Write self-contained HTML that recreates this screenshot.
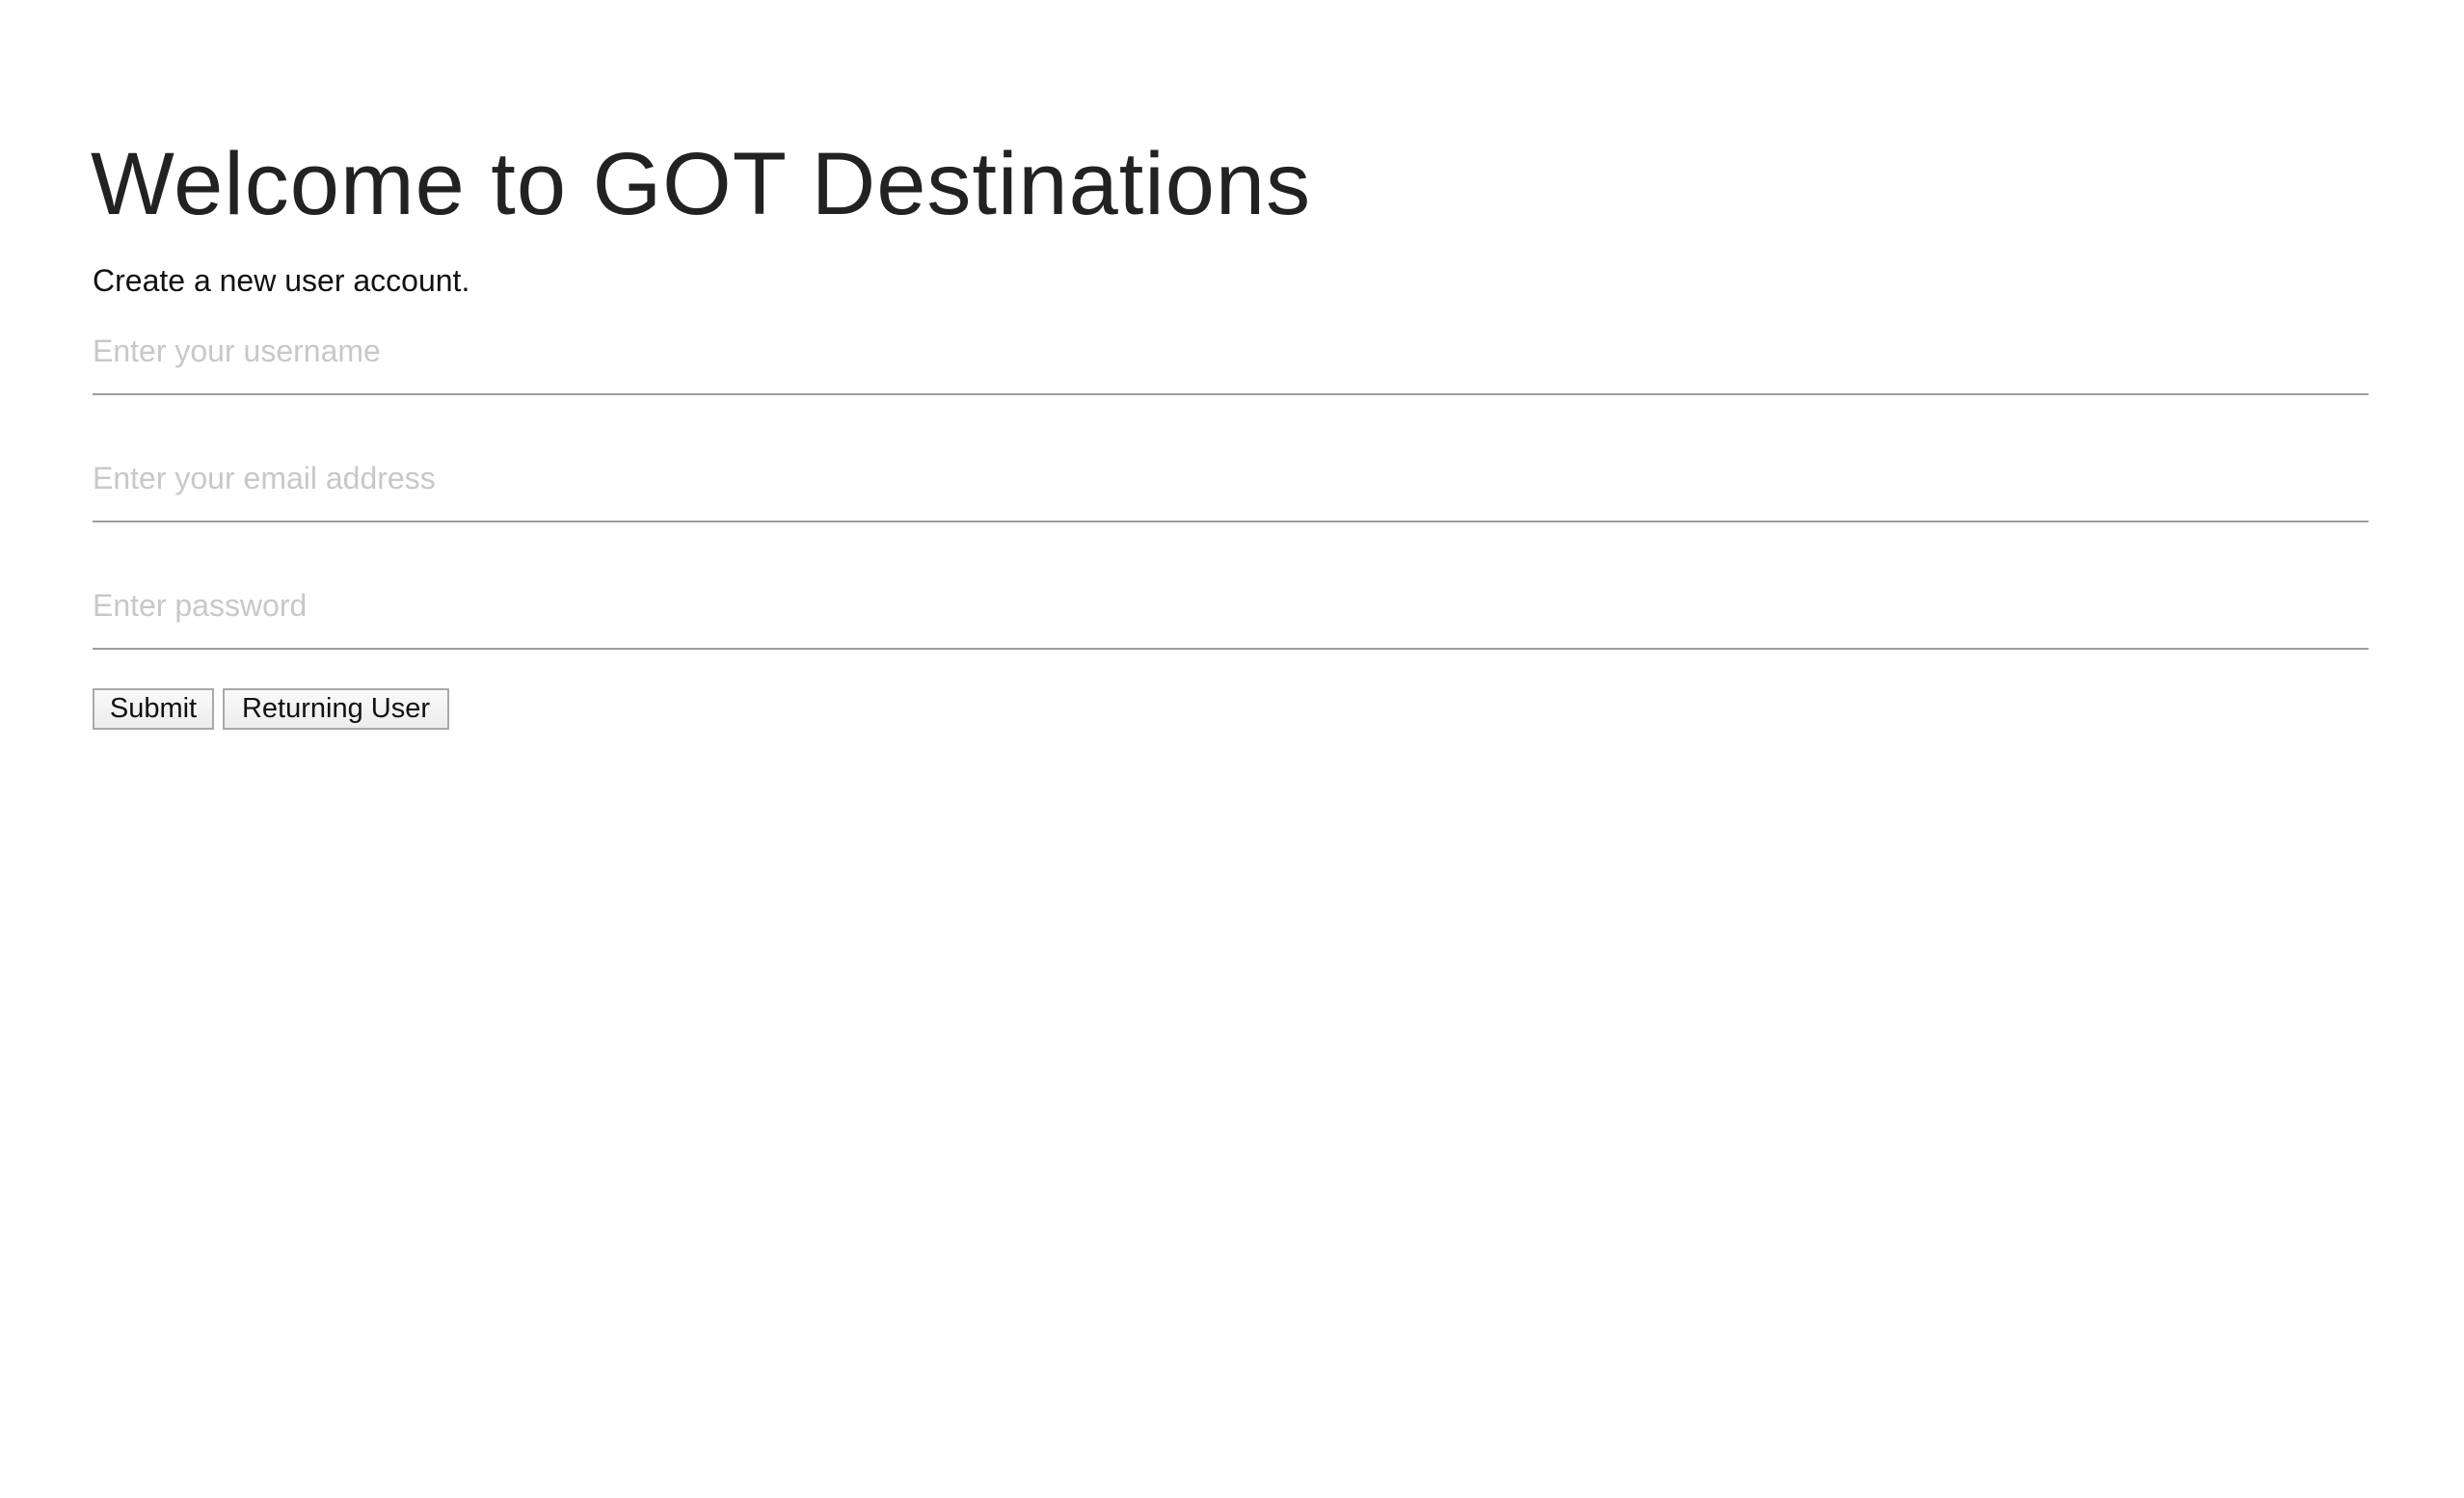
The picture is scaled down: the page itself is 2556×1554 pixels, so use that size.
<!DOCTYPE html>
<html><head><style>
html,body{margin:0;background:#fff;width:2556px;height:1554px;overflow:hidden;font-family:"Liberation Sans",sans-serif}
.a{position:absolute;white-space:nowrap}
h1{position:absolute;left:94px;top:138px;margin:0;font-weight:normal;font-size:92px;line-height:106px;color:#222;letter-spacing:1px}
.p{left:96px;top:273px;font-size:32px;color:#111;line-height:36px}
.ph{left:96px;font-size:32px;color:#c8c8c8;line-height:36px}
.ln{position:absolute;left:96px;width:2361px;height:2px;background:#9e9e9e}
.b{position:absolute;top:714px;height:43px;box-sizing:border-box;border:2px solid #a9a9a9;background:linear-gradient(#fafafa,#ececec);font-size:29px;line-height:38px;text-align:center;color:#111}
</style></head><body>
<h1>Welcome to GOT Destinations</h1>
<div class="a p">Create a new user account.</div>
<div class="a ph" style="top:346px">Enter your username</div>
<div class="ln" style="top:408px"></div>
<div class="a ph" style="top:478px">Enter your email address</div>
<div class="ln" style="top:540px"></div>
<div class="a ph" style="top:610px">Enter password</div>
<div class="ln" style="top:672px"></div>
<div class="b" style="left:96px;width:126px">Submit</div>
<div class="b" style="left:231px;width:235px">Returning User</div>
</body></html>
